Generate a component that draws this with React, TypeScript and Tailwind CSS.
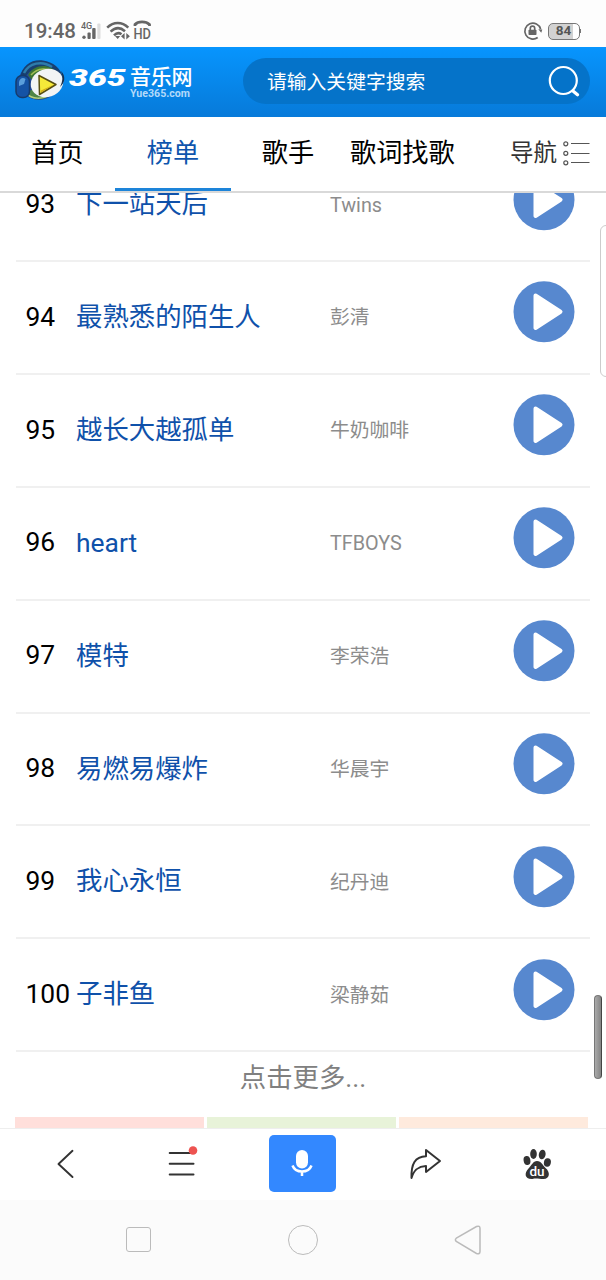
import React from 'react';

interface Song {
  rank: number;
  title: string;
  artist: string;
}

const songs: Song[] = [
  { rank: 93, title: '下一站天后', artist: 'Twins' },
  { rank: 94, title: '最熟悉的陌生人', artist: '彭清' },
  { rank: 95, title: '越长大越孤单', artist: '牛奶咖啡' },
  { rank: 96, title: 'heart', artist: 'TFBOYS' },
  { rank: 97, title: '模特', artist: '李荣浩' },
  { rank: 98, title: '易燃易爆炸', artist: '华晨宇' },
  { rank: 99, title: '我心永恒', artist: '纪丹迪' },
  { rank: 100, title: '子非鱼', artist: '梁静茹' },
];

const StatusBar: React.FC = () => (
  <div className="flex h-[47px] shrink-0 items-center bg-[#fdfdfd] pt-[15px] pl-[24px] pr-[24px] text-[#666]">
    <span className="w-[57px] pt-px text-[20.5px] leading-none font-medium">19:48</span>
    <svg width="20" height="20" viewBox="0 0 20 20" className="-mt-[1px]" fill="#666">
      <text x="0" y="7.5" fontSize="9" fontWeight="500">4G</text>
      <circle cx="3" cy="16.2" r="1.7" />
      <rect x="6.5" y="11.5" width="3.2" height="6.5" rx="1" />
      <rect x="11.2" y="7" width="3.4" height="11" rx="1" />
      <rect x="16.3" y="2.5" width="3.2" height="15.5" rx="1" fill="#ddd" />
    </svg>
    <svg width="25" height="20" viewBox="0 0 25 20" className="ml-[5px]" fill="none" stroke="#666" strokeWidth="2.5">
      <path d="M1.2 6.7C7.5 .4 16 .4 22.3 6.7" />
      <path d="M4.6 10.7C9.2 6.2 14.5 6.2 19 10.2" />
      <path d="M8 14.3C10.6 11.7 13.4 11.7 15.5 13.3" />
      <path d="M11.7 18l-2.7-3h5.2zM18.6 12v6.5l-3.6-3.2zM20.3 12v6.5l3.6-3.2z" fill="#666" stroke="none" />
    </svg>
    <svg width="22" height="28" viewBox="0 0 22 28" className="-mt-[1px] ml-[1px]" fill="none">
      <path d="M3 9V7.5C6 4 14 4 17.500 7.500V9" stroke="#666" strokeWidth="2.8" />
      <text x="1.500" y="21.500" fontSize="15" fontWeight="500" fill="#666" textLength="17.500" lengthAdjust="spacingAndGlyphs">HD</text>
    </svg>
    <svg width="20" height="20" viewBox="0 0 20 20" className="-mr-[1px] ml-auto" fill="none" stroke="#666" strokeWidth="1.7">
      <path d="M14.7 16.5A8 8 0 1 1 17.6 8" />
      <path d="M15.3 8.2l4 .2-1 3.4z" fill="#666" stroke="none" />
      <rect x="5.5" y="8.7" width="8" height="5.3" rx=".8" fill="#666" stroke="none" />
      <path d="M7.3 9V7.3a2.2 2.2 0 0 1 4.4 0V9" />
    </svg>
    <div className="ml-[6px] flex h-[17px] w-[32px] items-center justify-center rounded-[5px] border border-[#777] bg-linear-to-r from-[#d2d2d2] from-80% to-white to-80% text-[13.5px] leading-none font-bold text-[#555]">
      84
    </div>
    <div className="mr-[1px] h-[4px] w-[1.5px] bg-[#777]" />
  </div>
);

const Logo: React.FC = () => (
  <div className="flex w-[243px] shrink-0 pl-[14px]">
    <svg width="52" height="44" viewBox="0 0 52 44" className="mt-[11px] shrink-0">
      <ellipse cx="25" cy="23" rx="20" ry="19" fill="#24499a" />
      <path d="M6 20C8 7 18 1 29 2.5C39 4 47 10 49 20L45 26C40 8 17 4 10 22z" fill="#183f70" />
      <path d="M10 15C15 5 28 2 38 9" fill="none" stroke="#2d7cab" strokeWidth="2.5" />
      <path d="M14 17C20 6 36 5 43 15L34 13L18 22z" fill="#3c7534" />
      <path d="M17 17C24 9 34 10 40 14" fill="none" stroke="#a1be54" strokeWidth="1.5" />
      <path d="M10 33C16 43 29 44 38 36L27 31z" fill="#4f8546" />
      <path d="M12 35C18 42 29 41 35 37" fill="none" stroke="#b6cf83" strokeWidth="1.5" />
      <ellipse cx="33" cy="25" rx="16.5" ry="14" fill="#f2f4f5" transform="rotate(-18 33 25)" />
      <path d="M47 13C52 18 51 25 46 29C49 23 49 18 47 13z" fill="#17304f" />
      <rect x="2" y="17.5" width="13.5" height="22" rx="6" fill="#1553a5" stroke="#163b6c" strokeWidth="1.5" />
      <path d="M5 24C6 20 9 19 11.5 21L10 26L5 28z" fill="#5a9edb" />
      <path d="M25 17.5L42 26.5L25.5 36.5z" fill="#f5e939" stroke="#574e12" strokeWidth="1.5" strokeLinejoin="round" />
      <path d="M27 32.5L40 26.5L27 34.5z" fill="#d5ad17" />
    </svg>
    <div className="ml-[3px] w-[61px] pt-[18px] text-white">
      <span className="block origin-left scale-x-[1.43] text-[23.5px] leading-[26px] font-black italic">365</span>
    </div>
    <div className="pt-[19px] text-white">
      <div className="text-[21px] leading-[23px] font-medium tracking-[-0.2px]">音乐网</div>
      <div className="text-[10.6px] leading-[10px] font-bold text-[#b4dafa]">Yue365.com</div>
    </div>
  </div>
);

const Header: React.FC = () => (
  <header className="flex h-[70px] shrink-0 bg-linear-to-b from-[#0795fe] to-[#077ad9]">
    <Logo />
    <div className="mt-[11px] flex h-[46px] w-[347px] items-center rounded-full bg-[#0573c9] pl-[24px] pr-[10px] text-[19.8px] text-white">
      <span className="pt-[3px]">请输入关键字搜索</span>
      <svg width="32" height="32" viewBox="0 0 32 32" className="ml-auto" fill="none" stroke="#fff" strokeWidth="2.2">
        <circle cx="15.3" cy="15.5" r="13.5" />
        <path d="M25 26L29.5 29.8" strokeWidth="3.2" strokeLinecap="round" />
      </svg>
    </div>
  </header>
);

const Navbar: React.FC = () => (
  <nav className="flex h-[76px] shrink-0 border-b-2 border-[#d9d9d9] text-[26.2px] leading-[72px] text-black">
    <span className="w-[115px] text-center">首页</span>
    <span className="h-[74px] w-[116px] border-b-[3px] border-[#1d84d9] text-center text-[#0f55ad]">榜单</span>
    <span className="w-[114px] text-center">歌手</span>
    <span className="ml-[5px] w-[160px]">歌词找歌</span>
    <span className="text-[23.5px] leading-[73px] text-[#333]">导航</span>
    <svg width="28" height="26" viewBox="0 0 28 26" className="mt-[23px] ml-[6px]" fill="none" stroke="#555" strokeWidth="1.2">
      <circle cx="2.8" cy="3.8" r="2" />
      <circle cx="2.8" cy="13.3" r="2" />
      <circle cx="2.8" cy="22.8" r="2" />
      <path d="M8 3.5H26.5M8 13.5H26.5M8 22.5H26.5" />
    </svg>
  </nav>
);

const SongRow: React.FC<{ song: Song }> = ({ song }) => (
  <li className="mx-[16px] flex h-[112.86px] items-center border-b-2 border-[#f0f0f0]">
    <span className="w-[60px] pl-[9.5px] text-[26.4px] text-black">{song.rank}</span>
    <a className="w-[254px] pt-[1px] text-[26.4px] text-[#0f51aa]">{song.title}</a>
    <span className="pt-[1.5px] text-[19.8px] text-[#8c8c8c]">{song.artist}</span>
    <svg width="62" height="62" viewBox="0 0 62 62" className="-mt-[10px] mr-[15px] ml-auto">
      <circle cx="31" cy="30.7" r="30.5" fill="#5788cf" />
      <path d="M22.5 14.5L47.5 30.7L22.5 47z" fill="#fff" stroke="#fff" strokeWidth="4" strokeLinejoin="round" />
    </svg>
  </li>
);

const Toolbar: React.FC = () => (
  <div className="flex h-[72px] shrink-0 items-center border-t border-[#eee] bg-white pb-[1px]">
    <svg width="20" height="30" viewBox="0 0 20 30" className="ml-[56px]" fill="none" stroke="#333" strokeWidth="1.9" strokeLinecap="round" strokeLinejoin="round">
      <path d="M16.5 1.8L2.5 15L16.5 28" />
    </svg>
    <svg width="32" height="34" viewBox="0 0 32 34" className="-mt-[2px] ml-[91px]">
      <path d="M2.7 7H26.5M2.7 17.8H26.5M2.7 28.6H26.5" stroke="#333" strokeWidth="2" strokeLinecap="round" />
      <circle cx="26" cy="4.5" r="4.3" fill="#ed5350" />
    </svg>
    <div className="-mt-[1px] ml-[70px] flex h-[57px] w-[67px] items-center justify-center rounded-[5px] bg-[#3388ff]">
      <svg width="22" height="28" viewBox="0 0 22 28" className="-mt-[1px] -ml-[1px]" fill="none" stroke="#fff">
        <rect x="5" y="1" width="12" height="18.5" rx="6" fill="#fff" stroke="none" />
        <path d="M1.5 16.5C4.5 24.5 17.5 24.5 20.5 16.5M11 22v5" strokeWidth="2.5" />
      </svg>
    </div>
    <svg width="34" height="32" viewBox="0 0 34 32" className="-mt-[1px] ml-[73px]" fill="none" stroke="#333" strokeWidth="2" strokeLinejoin="round">
      <path d="M2.5 30C2 16 6 8.5 17 8.2V2L31 13L17 24V18C10 18.5 5 21 2.5 30z" />
    </svg>
    <svg width="30" height="32" viewBox="0 0 30 32" className="ml-[79px]" fill="#333">
      <ellipse cx="5" cy="12.5" rx="3.4" ry="4.5" transform="rotate(-10 5 12.5)" />
      <ellipse cx="11.5" cy="6" rx="3.3" ry="4.9" />
      <ellipse cx="20.2" cy="6.5" rx="3.4" ry="4.8" transform="rotate(10 20.2 6.5)" />
      <ellipse cx="25.4" cy="14.5" rx="3.5" ry="4.3" transform="rotate(10 25.4 14.5)" />
      <path d="M15 13C19.5 13 20.5 17 23.5 20C28.5 24 28 31 21.5 31C17 31 14 30 10.5 31C2.5 31.5 2 25 6.5 20.5C9.5 17.5 11 13 15 13z" />
      <text x="7.5" y="27.5" fontSize="13.5" fontWeight="500" fill="#fff">du</text>
    </svg>
  </div>
);

const SystemNav: React.FC = () => (
  <div className="flex h-[80px] shrink-0 items-center bg-[#fbfbfb] pb-[1px] pl-[125.5px]">
    <div className="h-[25px] w-[25px] rounded-[3px] border-[1.5px] border-[#bbb]" />
    <div className="ml-[137.5px] h-[30px] w-[30px] rounded-full border-[1.5px] border-[#bbb]" />
    <svg width="28" height="30" viewBox="0 0 28 30" className="ml-[136px]" fill="none" stroke="#bbb" strokeWidth="1.5">
      <path d="M2.3 13.2L22.5 1.5Q26 .3 26 3.5V26.5Q26 29.5 22.5 28.5L2.3 16.5Q.5 14.8 2.3 13.2z" />
    </svg>
  </div>
);

const App: React.FC = () => {
  return (
    <div className="relative flex h-[1280px] w-[606px] flex-col overflow-hidden bg-white font-['Roboto','Noto_Sans_CJK_SC',sans-serif]">
      <StatusBar />
      <Header />
      <Navbar />

      <main className="flex min-h-0 flex-1 flex-col overflow-hidden">
        <ul className="-mt-[43.8px] shrink-0">
          {songs.map((song) => (
            <SongRow key={song.rank} song={song} />
          ))}
        </ul>
        <div className="h-[65px] shrink-0 text-center text-[26.4px] leading-[52px] text-[#808080]">点击更多...</div>
        <div className="mx-[15px] grid h-[60px] shrink-0 grid-cols-3 gap-[3px] pr-[3px]">
          <div className="bg-[#ffdfdb]" />
          <div className="bg-[#e8f3d9]" />
          <div className="bg-[#feeadd]" />
        </div>
      </main>

      <Toolbar />
      <SystemNav />

      {/* edge panel and scroll thumb float above the list */}
      <div className="absolute top-[225px] -right-[6px] h-[152px] w-[12px] rounded-[6px] border border-[#ccc] bg-white" />
      <div className="absolute top-[995px] right-[4px] h-[84px] w-[8px] rounded-full border border-[#777] border-r-[#444] bg-linear-to-r from-[#aaa] to-[#858585]" />
    </div>
  );
};

export default App;
